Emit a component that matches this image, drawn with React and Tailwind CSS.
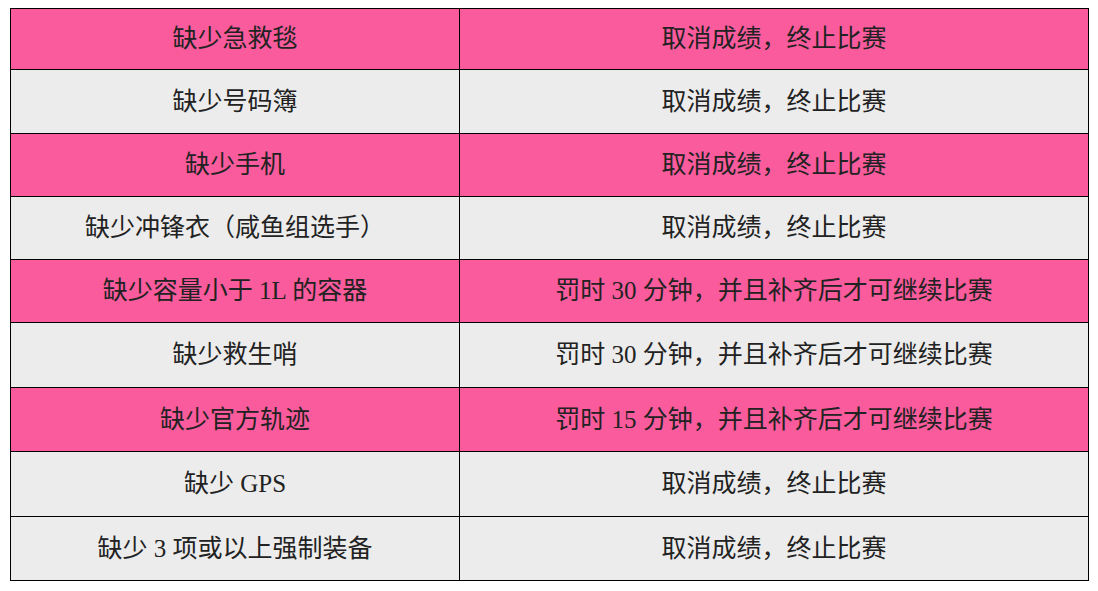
import React from "react";

const rows = [
  ["缺少急救毯", "取消成绩，终止比赛", "h-[60px] bg-[#f95b9c]"],
  ["缺少号码簿", "取消成绩，终止比赛", "h-[64px] bg-[#ececec] border-t"],
  ["缺少手机", "取消成绩，终止比赛", "h-[63px] bg-[#f95b9c] border-t"],
  ["缺少冲锋衣（咸鱼组选手）", "取消成绩，终止比赛", "h-[63px] bg-[#ececec] border-t"],
  ["缺少容量小于 1L 的容器", "罚时 30 分钟，并且补齐后才可继续比赛", "h-[63px] bg-[#f95b9c] border-t"],
  ["缺少救生哨", "罚时 30 分钟，并且补齐后才可继续比赛", "h-[65px] bg-[#ececec] border-t"],
  ["缺少官方轨迹", "罚时 15 分钟，并且补齐后才可继续比赛", "h-[64px] bg-[#f95b9c] border-t"],
  ["缺少 GPS", "取消成绩，终止比赛", "h-[65px] bg-[#ececec] border-t"],
  ["缺少 3 项或以上强制装备", "取消成绩，终止比赛", "h-[64px] bg-[#ececec] border-t"],
];

export default function App() {
  return (
    <div className="w-[1098px] h-[591px] bg-white pt-2 pl-[10px]">
      <div
        className="w-[1079px] border border-black text-[25px] text-[#222]"
        style={{ fontFamily: '"Liberation Serif", "Noto Sans CJK SC", serif' }}
      >
        {rows.map(([item, penalty, cls], i) => (
          <div key={i} className={`grid grid-cols-[449px_1fr] border-black ${cls}`}>
            <div className="flex items-center justify-center border-r border-black">{item}</div>
            <div className="flex items-center justify-center">{penalty}</div>
          </div>
        ))}
      </div>
    </div>
  );
}
